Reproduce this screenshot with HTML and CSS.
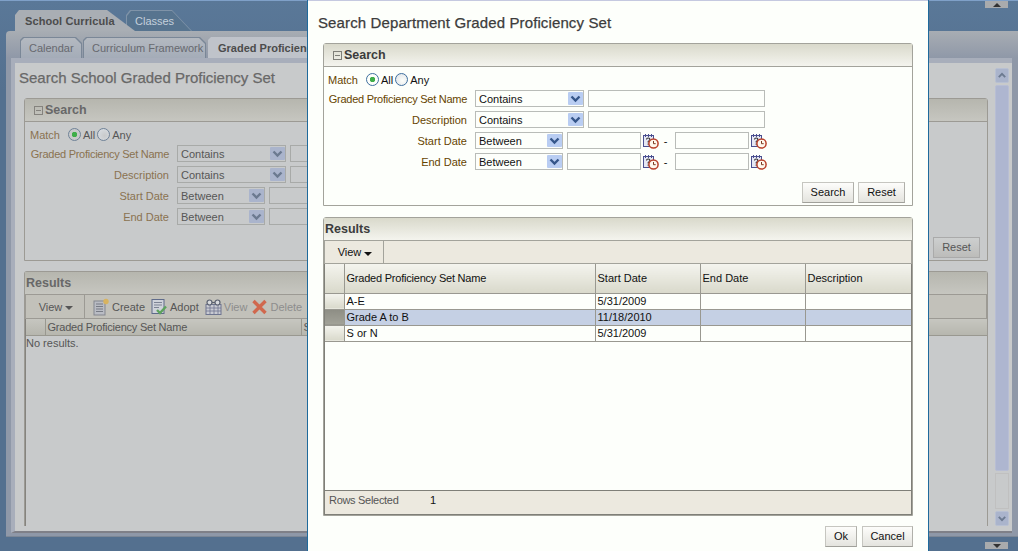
FILE: index.html
```html
<!DOCTYPE html>
<html lang="en">
<head>
<meta charset="utf-8">
<title>Search Department Graded Proficiency Set</title>
<link rel="stylesheet" href="styles.css">
</head>
<body>
<svg class="defs" width="0" height="0" aria-hidden="true">
  <symbol id="i-chev" viewBox="0 0 15 13"><path d="M3.5 4.5 7.5 8.5 11.5 4.5" fill="none" stroke="currentColor" stroke-width="2.4"/></symbol>
  <symbol id="i-cal" viewBox="0 0 17 16">
    <rect x="1.5" y="2.5" width="10" height="11" fill="#e6e8f4" stroke="#4a4f8f"/>
    <path d="M3.5 1v3M6.5 1v3M9.5 1v3" stroke="#4a4f8f"/>
    <path d="M4.5 6.5q0-1.5 1.7-1.5t1.6 1.5q0 1-1.6 2v1" fill="none" stroke="#333" stroke-width="1.1"/>
    <path d="M6.2 10.5v1.3" stroke="#333" stroke-width="1.1"/>
    <circle cx="11.5" cy="10.5" r="4.6" fill="#fff8ee" stroke="#b8402a" stroke-width="1.5"/>
    <path d="M11.5 8v2.7h2.2" fill="none" stroke="#7a3a20"/>
  </symbol>
  <symbol id="i-create" viewBox="0 0 17 18">
    <rect x="1" y="3" width="11" height="14" fill="#b9bcc4" stroke="#84878f"/>
    <path d="M3 6h7M3 8.500h7M3 11h7M3 13.500h7" stroke="#777b85"/>
    <circle cx="13" cy="3.500" r="2.700" fill="#d8b35f"/>
  </symbol>
  <symbol id="i-adopt" viewBox="0 0 17 18">
    <rect x="1" y="1.500" width="12" height="14" fill="#cfd2da" stroke="#5f6b8a"/>
    <path d="M3 4.500h8M3 7h8M3 9.500h5" stroke="#7d8394"/>
    <path d="M6 12l3 3 6-6.500" fill="none" stroke="#5da35d" stroke-width="2.400"/>
  </symbol>
  <symbol id="i-view" viewBox="0 0 17 18">
    <rect x="1" y="6.500" width="15" height="10" fill="#c8cad2" stroke="#6e7590"/>
    <path d="M1 10h15M1 13h15M5 7v9M9 7v9M13 7v9" stroke="#6e7590" stroke-width=".8"/>
    <circle cx="4.500" cy="4.500" r="2.500" fill="#d8dade" stroke="#5a6070" stroke-width="1.200"/>
    <circle cx="12.500" cy="4.500" r="2.500" fill="#d8dade" stroke="#5a6070" stroke-width="1.200"/>
    <path d="M7 4.500h3" stroke="#5a6070"/>
  </symbol>
  <symbol id="i-del" viewBox="0 0 17 18">
    <path d="M2.500 3 14.500 15M14.500 3 2.500 15" stroke="#d0684e" stroke-width="3.400"/>
  </symbol>
</svg>

<div class="page">
  <nav class="main-tabs">
    <span class="tab tab-main is-active">School Curricula</span>
    <span class="tab tab-main tab-classes">Classes</span>
  </nav>
  <div class="shell">
    <nav class="sub-tabs">
      <span class="tab tab-sub tab-cal">Calendar</span>
      <span class="tab tab-sub tab-fw">Curriculum Framework</span>
      <span class="tab tab-sub is-active">Graded Proficiency Sets</span>
    </nav>
    <div class="content">
      <main class="content-main">
        <h1 class="title title-page">Search School Graded Proficiency Set</h1>
        <section class="panel">
          <header class="panel-head"><span class="collapse"></span>Search</header>
          <div class="panel-body query">
            <div class="row match-row">
              <span class="lbl lbl-match">Match</span>
              <span class="radio is-on"></span><span class="opt">All</span>
              <span class="radio"></span><span class="opt">Any</span>
            </div>
            <div class="row"><label class="lbl lbl-long">Graded Proficiency Set Name</label><span class="select"><span>Contains</span><svg class="chev"><use href="#i-chev"/></svg></span><input class="field field-wide"></div>
            <div class="row"><label class="lbl">Description</label><span class="select"><span>Contains</span><svg class="chev"><use href="#i-chev"/></svg></span><input class="field field-wide"></div>
            <div class="row"><label class="lbl">Start Date</label><span class="select select-short"><span>Between</span><svg class="chev"><use href="#i-chev"/></svg></span><input class="field field-wide"></div>
            <div class="row"><label class="lbl">End Date</label><span class="select select-short"><span>Between</span><svg class="chev"><use href="#i-chev"/></svg></span><input class="field field-wide"></div>
            <div class="actions"><button class="btn btn-search">Search</button><button class="btn btn-reset">Reset</button></div>
          </div>
        </section>
        <section class="panel panel-results panel-grow">
          <header class="panel-head results-head">Results</header>
          <div class="toolbar">
            <span class="view-menu">View <i class="caret"></i></span>
            <span class="tool"><svg class="ti"><use href="#i-create"/></svg>Create</span>
            <span class="tool"><svg class="ti"><use href="#i-adopt"/></svg>Adopt</span>
            <span class="tool is-off"><svg class="ti"><use href="#i-view"/></svg>View</span>
            <span class="tool is-off"><svg class="ti"><use href="#i-del"/></svg>Delete</span>
          </div>
          <div class="grid-wrap">
            <table class="grid grid-page">
              <thead><tr><th class="c-row"></th><th class="c-name">Graded Proficiency Set Name</th><th class="c-clip">S</th><th></th></tr></thead>
            </table>
            <p class="empty">No results.</p>
          </div>
        </section>
      </main>
      <aside class="scrollbar">
        <span class="sb-btn"><svg class="sb-chev up"><use href="#i-chev"/></svg></span>
        <span class="sb-thumb"></span>
        <span class="sb-track"></span>
        <span class="sb-btn"><svg class="sb-chev"><use href="#i-chev"/></svg></span>
      </aside>
    </div>
  </div>
  <span class="edge-btn edge-top"><i class="arrow arrow-up"></i></span>
  <span class="edge-btn edge-bottom"><i class="arrow"></i></span>
</div>

<div class="modal" role="dialog">
  <h2 class="title title-modal">Search Department Graded Proficiency Set</h2>
  <section class="panel">
    <header class="panel-head"><span class="collapse"></span>Search</header>
    <div class="panel-body query">
      <div class="row match-row">
        <span class="lbl lbl-match">Match</span>
        <span class="radio is-on"></span><span class="opt">All</span>
        <span class="radio"></span><span class="opt">Any</span>
      </div>
      <div class="row"><label class="lbl lbl-long">Graded Proficiency Set Name</label><span class="select"><span>Contains</span><svg class="chev"><use href="#i-chev"/></svg></span><input class="field field-wide"></div>
      <div class="row"><label class="lbl">Description</label><span class="select"><span>Contains</span><svg class="chev"><use href="#i-chev"/></svg></span><input class="field field-wide"></div>
      <div class="row"><label class="lbl">Start Date</label><span class="select select-short"><span>Between</span><svg class="chev"><use href="#i-chev"/></svg></span><input class="field field-date"><svg class="cal"><use href="#i-cal"/></svg><span class="dash">-</span><input class="field field-date"><svg class="cal"><use href="#i-cal"/></svg></div>
      <div class="row"><label class="lbl">End Date</label><span class="select select-short"><span>Between</span><svg class="chev"><use href="#i-chev"/></svg></span><input class="field field-date"><svg class="cal"><use href="#i-cal"/></svg><span class="dash">-</span><input class="field field-date"><svg class="cal"><use href="#i-cal"/></svg></div>
      <div class="actions"><button class="btn btn-search">Search</button><button class="btn btn-reset">Reset</button></div>
    </div>
  </section>
  <section class="panel panel-results panel-grow">
    <header class="panel-head results-head">Results</header>
    <div class="toolbar">
      <span class="view-menu">View <i class="caret"></i></span>
    </div>
    <div class="grid-wrap">
      <table class="grid grid-modal">
        <thead><tr><th class="c-row"></th><th class="c-name">Graded Proficiency Set Name</th><th class="c-date">Start Date</th><th class="c-date">End Date</th><th>Description</th></tr></thead>
        <tbody>
          <tr><td class="c-row"></td><td>A-E</td><td>5/31/2009</td><td></td><td></td></tr>
          <tr class="is-selected"><td class="c-row"></td><td>Grade A to B</td><td>11/18/2010</td><td></td><td></td></tr>
          <tr><td class="c-row"></td><td>S or N</td><td>5/31/2009</td><td></td><td></td></tr>
        </tbody>
      </table>
    </div>
    <footer class="status"><span class="status-lbl">Rows Selected</span><span class="status-val">1</span></footer>
  </section>
  <div class="modal-actions"><button class="btn btn-ok">Ok</button><button class="btn btn-cancel">Cancel</button></div>
</div>
</body>
</html>
```
FILE: styles.css
```css
:root {
  --paper: #fdfffb;
  --ink: #111;
  --label: #664400;
  --title: #3c3c3c;
  --line: #a3a39b;
  --line-strong: #7f7f78;
  --head-a: #d9d9cb;
  --head-b: #f4f4ee;
  --bar: #ece9df;
  --field: #b9bcb8;
  --chev-bg: #b9cdf2;
  --chev: #35568a;
  --ring: #3f6f9f;
}
* { box-sizing: border-box; }
html, body { margin: 0; height: 100%; }
body {
  font: 11px/14px "Liberation Sans", Arial, sans-serif;
  color: var(--ink);
  overflow: hidden;
  position: relative;
}
.defs { position: absolute; }

/* dimmed page beneath the dialog */
.page {
  --paper: #c8cacb;
  --ink: #565656;
  --label: #8a7250;
  --title: #686868;
  --line: #9c9a94;
  --line-strong: #85837e;
  --head-a: #b6b6ae;
  --head-b: #c6c6c0;
  --bar: #c2c1ba;
  --field: #a8aaa8;
  --chev-bg: #aab4cc;
  --chev: #6c7a90;
  --ring: #6f8298;
  height: 551px;
  display: flex;
  flex-direction: column;
  color: var(--ink);
  padding-top: 9px;
  background: linear-gradient(#5a7898, #54708f 90px);
  border-top: 1px solid #7fa0c8;
  position: relative;
}
.main-tabs { display: flex; padding-left: 15px; height: 21px; flex: none; }
.tab { display: block; position: relative; white-space: nowrap; }
.tab-main {
  width: 120px;
  padding: 4px 0 0 10px;
  font-size: 11px;
  letter-spacing: .1px;
  font-weight: bold;
  color: #4c4c4c;
  background: #a9aeb4;
  clip-path: polygon(0 5px, 4px 0, 92px 0, 100% 100%, 0 100%);
  z-index: 1;
}
.tab-classes {
  width: 66px;
  margin-left: -9px;
  padding-left: 9px;
  font-weight: normal;
  letter-spacing: 0;
  color: #c4d0dc;
  background: #7f93a8;
  clip-path: polygon(0 5px, 4px 0, 46px 0, 100% 100%, 0 100%);
  z-index: 0;
}
.tab-classes::before {
  content: "";
  position: absolute;
  inset: 1px 1px 0 1px;
  background: #57748f;
  clip-path: polygon(0 5px, 4px 0, 45px 0, 100% 100%, 0 100%);
  z-index: -1;
}
.shell {
  flex: 1;
  margin: 0 0 14px 6px;
  padding: 6px 6px 4px 5px;
  display: flex;
  flex-direction: column;
  background: linear-gradient(#a8adb3, #8f98a8 27px);
  border-radius: 4px 0 0 0;
  min-height: 0;
  box-shadow: inset 0 -1px 0 #7c8796;
}
.sub-tabs { display: flex; gap: 1px; padding-left: 9px; height: 21px; flex: none; }
.tab-sub {
  padding: 4px 0 0 9px;
  color: #67696f;
  background: #7a8797;
  clip-path: polygon(0 3px, 3px 0, calc(100% - 6px) 0, 100% 6px, 100% 100%, 0 100%);
  z-index: 0;
}
.tab-sub::before {
  content: "";
  position: absolute;
  inset: 1px 1px 0;
  background: linear-gradient(#b4b9c0, #a4acb8);
  clip-path: inherit;
  z-index: -1;
}
.tab-cal { width: 62px; }
.tab-fw { width: 123px; }
.tab-sub.is-active {
  margin-left: 1px;
  padding-left: 10px;
  font-weight: bold;
  color: #4c4c4c;
  background: #bfc3ca;
}
.tab-sub.is-active::before { display: none; }
.content {
  flex: 1;
  min-height: 0;
  display: flex;
  gap: 7px;
  background: var(--paper);
  border-left: 4px solid #a8aebb;
  border-top: 5px solid #a8aebb;
  border-bottom: 2px solid #7f8088;
  padding: 0 3px 0 9px;
}
.content-main { flex: 1; min-width: 0; display: flex; flex-direction: column; padding-bottom: 5px; }

.title { margin: 0; font-weight: normal; font-size: 15px; line-height: 20px; color: var(--title); -webkit-text-stroke: .25px currentColor; }
.title-page { height: 35px; padding-top: 5px; margin-left: -5px; }
.title-modal { height: 42px; padding-top: 12px; margin-left: -5px; letter-spacing: .12px; }

.panel { border: 1px solid var(--line); border-radius: 3px 3px 0 0; background: var(--paper); flex: none; }
.panel-results { margin-top: 10px; }
.page .panel-results { border-bottom: 0; }
.panel-grow { flex: 1; min-height: 0; display: flex; flex-direction: column; }
.panel-head {
  height: 23px;
  padding: 1px 0 0 9px;
  font-size: 12.500px;
  line-height: 17px;
  font-weight: bold;
  color: var(--title);
  background: linear-gradient(var(--head-a), var(--head-b));
  border-bottom: 1px solid var(--line);
  display: flex;
  align-items: center;
}
.results-head { padding: 1px 0 0 1px; height: 22px; border-bottom: 0; }
.collapse {
  width: 9px;
  height: 9px;
  margin-right: 2px;
  border: 1px solid var(--line-strong);
  background: linear-gradient(var(--line-strong), var(--line-strong)) center / 5px 1px no-repeat;
}
.panel-body { height: 138px; }
.query { padding: 6px 0 2px 4px; display: flex; flex-direction: column; gap: 4px; position: relative; }
.page .query { padding-left: 5px; }
.row { display: flex; align-items: center; height: 17px; }
.match-row { height: 13px; }
.lbl { width: 139px; margin-right: 8px; text-align: right; color: var(--label); white-space: nowrap; }
.lbl-long { letter-spacing: -.27px; }
.lbl-match { width: 38px; margin-right: 0; text-align: left; }
.radio {
  width: 13px;
  height: 13px;
  border-radius: 50%;
  border: 1px solid var(--ring);
  background: radial-gradient(circle at 60% 60%, var(--paper), #dbe0e6);
  margin-right: 2px;
}
.radio.is-on { background: radial-gradient(circle, #3fae4a 0 2.500px, var(--paper) 3px); }
.opt { margin-right: 2px; }
.select {
  width: 109px;
  height: 17px;
  padding-left: 3px;
  display: flex;
  align-items: center;
  justify-content: space-between;
  border: 1px solid var(--field);
  background: var(--paper);
  flex: none;
}
.select-short { width: 88px; }
.chev {
  width: 15px;
  height: 13px;
  color: var(--chev);
  background: var(--chev-bg);
  border-radius: 1px;
}
.field {
  height: 17px;
  padding: 0;
  margin: 0 0 0 4px;
  border: 1px solid var(--field);
  background: var(--paper);
  flex: none;
}
.field-wide { width: 177px; }
.field-date { width: 74px; }
.cal { width: 17px; height: 16px; margin-left: 1px; flex: none; }
.dash { width: 13px; text-align: center; margin-right: -1px; }
.actions {
  position: absolute;
  right: 7px;
  bottom: 2px;
  display: flex;
  gap: 4px;
}
.btn {
  height: 21px;
  padding: 0 0 2px;
  font: 11px/14px "Liberation Sans", Arial, sans-serif;
  color: var(--ink);
  border: 1px solid #c6c6c0;
  border-bottom-color: #a0a09a;
  border-right-color: #b0b0aa;
  background: linear-gradient(#fdfdfb, #e4e4de);
}
.page .btn { background: linear-gradient(#cdcfcf, #bcbcba); border-color: #aaa; }
.btn-search { width: 52px; }
.btn-reset { width: 47px; }
.btn-ok { width: 32px; }
.btn-cancel { width: 51px; }

.toolbar {
  height: 24px;
  flex: none;
  display: flex;
  align-items: center;
  background: var(--bar);
  border: 1px solid var(--line);
}
.page .toolbar { height: 25px; }
.view-menu {
  width: 59px;
  height: 100%;
  padding-left: 2px;
  display: flex;
  align-items: center;
  justify-content: center;
  gap: 3px;
  border-right: 1px solid var(--line);
  margin-right: 8px;
}
.caret { border: 4px solid transparent; border-top-color: currentColor; border-bottom: 0; margin-top: 3px; }
.tool { display: flex; align-items: center; gap: 2px; margin-right: 6px; }
.tool.is-off { color: #8d8d8d; margin-right: 4px; }
.ti { width: 17px; height: 18px; }
.grid-wrap {
  flex: 1;
  min-height: 0;
  border: solid var(--line-strong);
  border-width: 0 1px;
}
.page .grid-wrap { border-right: 0; }
.grid { width: 100%; border-collapse: collapse; table-layout: fixed; }
.grid th, .grid td { padding: 0 1px 0 2px; border: 1px solid #999890; text-align: left; font-weight: normal; white-space: nowrap; overflow: hidden; }
.grid tr > :first-child { border-left: 0; }
.grid tr > :last-child { border-right: 0; }
.grid thead th { background: linear-gradient(var(--head-b), var(--head-a)); border-top: 0; }
.grid th { color: var(--ink); }
.grid td { height: 16px; }
.grid .c-row { width: 19px; background: linear-gradient(var(--head-b), var(--head-a)); }
.c-name { width: 251px; letter-spacing: -.22px; }
.c-date { width: 105px; }
.grid-modal th { height: 29px; }
.grid-page th { height: 16px; }
.grid-page .c-name { width: 256px; }
.grid-page .c-clip { width: 120px; }
.grid .is-selected td { background: #c5d0e4; }
.grid .is-selected .c-row { background: linear-gradient(#8d8d84, #a2a298); }
.empty { margin: 0; }
.status {
  height: 25px;
  flex: none;
  padding: 2px 4px;
  display: flex;
  background: var(--bar);
  border: 1px solid var(--line-strong);
  color: #555;
}
.status-lbl { width: 101px; letter-spacing: -.3px; }
.status-val { color: #111; }

.scrollbar { width: 14px; margin-top: 5px; margin-bottom: 5px; display: flex; flex-direction: column; gap: 2px; flex: none; }
.sb-btn { height: 15px; background: #aab4cc; border-radius: 2px; flex: none; border: 1px solid #b8c0d2; }
.sb-chev { display: block; width: 12px; height: 13px; color: #6c7a90; }
.sb-chev.up { transform: scaleY(-1); }
.sb-thumb { height: 386px; background: #aeb6d0; border-radius: 2px; border: 1px solid #b8bed4; flex: none; }
.sb-track { flex: 1; border: 1px solid #c0c0c0; }
.edge-btn {
  position: absolute;
  left: 985px;
  width: 23px;
  height: 7px;
  background: #a9abad;
  display: flex;
  align-items: center;
  justify-content: center;
}
.edge-top { top: 0; }
.edge-bottom { top: 541px; }
.arrow { border: 4px solid transparent; border-top: 4px solid #333; border-bottom: 0; }
.arrow-up { border-top: 0; border-bottom: 4px solid #333; }

/* dialog */
.modal {
  position: absolute;
  top: 0;
  left: 307px;
  width: 622px;
  height: 551px;
  padding: 1px 15px 4px 15px;
  display: flex;
  flex-direction: column;
  background: var(--paper);
  border: solid #1f6a9c;
  border-width: 0 1px;
  box-shadow: inset 0 1px 0 #c5c9e0;
}
.modal .panel-results { margin-top: 11px; }
.modal-actions { display: flex; justify-content: flex-end; gap: 5px; padding-top: 10px; flex: none; }
```
